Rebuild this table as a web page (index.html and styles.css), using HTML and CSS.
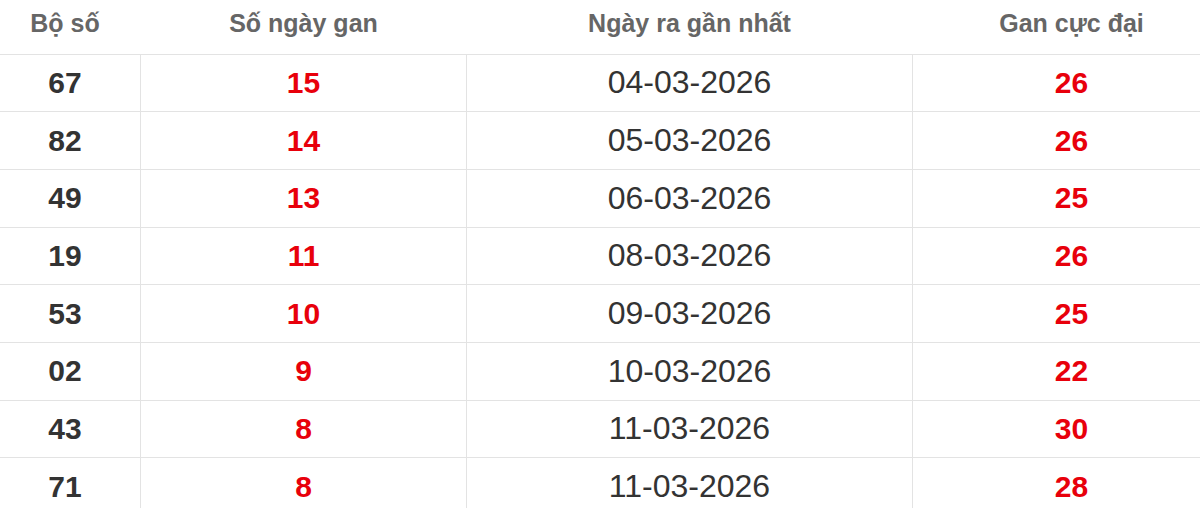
FILE: index.html
```html
<!DOCTYPE html>
<html lang="vi">
<head>
<meta charset="utf-8">
<title>Lô gan</title>
<link rel="stylesheet" href="styles.css">
</head>
<body>
<table class="gan-table">
  <colgroup>
    <col class="c1"><col class="c2"><col class="c3"><col class="c4">
  </colgroup>
  <thead>
    <tr><th>Bộ số</th><th>Số ngày gan</th><th>Ngày ra gần nhất</th><th>Gan cực đại</th></tr>
  </thead>
  <tbody>
    <tr><td class="num">67</td><td class="red">15</td><td class="date">04-03-2026</td><td class="red">26</td></tr>
    <tr><td class="num">82</td><td class="red">14</td><td class="date">05-03-2026</td><td class="red">26</td></tr>
    <tr><td class="num">49</td><td class="red">13</td><td class="date">06-03-2026</td><td class="red">25</td></tr>
    <tr><td class="num">19</td><td class="red">11</td><td class="date">08-03-2026</td><td class="red">26</td></tr>
    <tr><td class="num">53</td><td class="red">10</td><td class="date">09-03-2026</td><td class="red">25</td></tr>
    <tr><td class="num">02</td><td class="red">9</td><td class="date">10-03-2026</td><td class="red">22</td></tr>
    <tr><td class="num">43</td><td class="red">8</td><td class="date">11-03-2026</td><td class="red">30</td></tr>
    <tr><td class="num">71</td><td class="red">8</td><td class="date">11-03-2026</td><td class="red">28</td></tr>
  </tbody>
</table>
</body>
</html>
```
FILE: styles.css
```css
html, body {
  margin: 0;
  padding: 0;
  background: #fff;
  overflow: hidden;
}
body {
  font-family: "Liberation Sans", Arial, sans-serif;
}
.gan-table {
  margin-left: -11px;
  width: 1241px;
  table-layout: fixed;
  border-collapse: collapse;
}
.c1 { width: 151px; }
.c2 { width: 326px; }
.c3 { width: 446px; }
.c4 { width: 318px; }
.gan-table th {
  height: 54px;
  padding: 0 0 6px 0;
  box-sizing: border-box;
  font-size: 25px;
  font-weight: bold;
  color: #666;
  text-align: center;
  border-bottom: 1px solid #e3e3e3;
}
.gan-table td {
  height: 56.7px;
  padding: 0;
  text-align: center;
  border: 1px solid #e3e3e3;
  border-top: none;
  vertical-align: middle;
}
.num {
  font-size: 30px;
  font-weight: bold;
  color: #333;
}
.red {
  font-size: 30px;
  font-weight: bold;
  color: #e8000b;
}
.date {
  font-size: 32px;
  color: #333;
}
```
